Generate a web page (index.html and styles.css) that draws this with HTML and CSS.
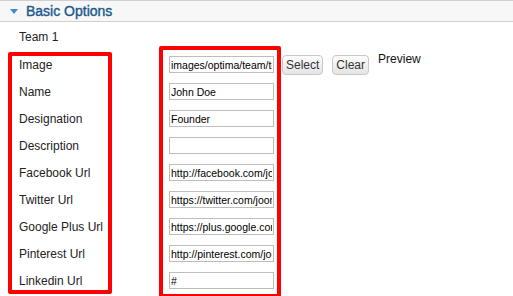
FILE: index.html
```html
<!DOCTYPE html>
<html lang="en">
<head>
    <meta charset="UTF-8">
    <title>Basic Options</title>
    <link rel="stylesheet" href="styles.css">
</head>
<body>
    <div class="panel-head">
        <span class="caret"></span>
        <span class="panel-title">Basic Options</span>
    </div>
    <div class="panel-body">
        <div class="group-title">Team 1</div>
        <div class="row">
            <label>Image</label>
            <div class="field">
                <input type="text" value="images/optima/team/team1.jpg">
                <button class="btn btn-select">Select</button>
                <button class="btn">Clear</button>
                <span class="preview">Preview</span>
            </div>
        </div>
        <div class="row"><label>Name</label><div class="field"><input type="text" value="John Doe"></div></div>
        <div class="row"><label>Designation</label><div class="field"><input type="text" value="Founder"></div></div>
        <div class="row"><label>Description</label><div class="field"><input type="text" value=""></div></div>
        <div class="row"><label>Facebook Url</label><div class="field"><input type="text" value="http://facebook.com/joomshaper"></div></div>
        <div class="row"><label>Twitter Url</label><div class="field"><input type="text" value="https://twitter.com/joomshaper"></div></div>
        <div class="row"><label>Google Plus Url</label><div class="field"><input type="text" value="https://plus.google.com/joomshaper"></div></div>
        <div class="row"><label>Pinterest Url</label><div class="field"><input type="text" value="http://pinterest.com/joomshaper"></div></div>
        <div class="row"><label>Linkedin Url</label><div class="field"><input type="text" value="#"></div></div>
    </div>

    <!-- highlight marks -->
    <div class="mark mark-labels"></div>
    <div class="mark mark-fields"></div>
</body>
</html>
```

FILE: styles.css
```css
body {
    margin: 0;
    font-family: "Liberation Sans", Arial, sans-serif;
    font-size: 12px;
    color: #222;
    background: #fff;
}
.panel-head {
    display: flex;
    align-items: center;
    height: 20px;
    border-top: 1px solid #d0d0d0;
    border-bottom: 1px solid #d0d0d0;
    background: #f7f7f7;
    padding-left: 10px;
}
.caret {
    width: 0;
    height: 0;
    border-left: 4px solid transparent;
    border-right: 4px solid transparent;
    border-top: 5px solid #3b8dcf;
    margin-right: 8px;
    margin-top: 1px;
}
.panel-title {
    font-size: 14px;
    color: #1b5b8c;
    -webkit-text-stroke: 0.4px #1b5b8c;
}
.panel-body {
    padding: 2px 0 0 19px;
}
.group-title {
    height: 27px;
    line-height: 27px;
}
.row {
    display: flex;
    align-items: center;
    height: 27px;
}
.row label {
    width: 150px;
}
.field {
    display: flex;
    align-items: center;
}
.field input {
    box-sizing: border-box;
    width: 105px;
    height: 17px;
    margin: 0;
    padding: 0 1px;
    border: 1px solid #bdbdbd;
    font-family: "Liberation Sans", Arial, sans-serif;
    font-size: 10.5px;
    color: #000;
    outline: none;
}
.btn {
    height: 20px;
    margin-left: 9px;
    padding: 0 3px;
    border: 1px solid #c8c8c8;
    border-radius: 4px;
    background: linear-gradient(#fdfdfd, #e4e4e4);
    font-family: "Liberation Sans", Arial, sans-serif;
    font-size: 12px;
    color: #333;
}
.btn-select {
    margin-left: 8px;
}
.preview {
    margin-left: 9px;
    align-self: flex-start;
    margin-top: -3px;
    color: #111;
}
.mark {
    position: absolute;
    border: 4px solid #f00;
    border-radius: 2px;
    box-sizing: border-box;
}
.mark-labels {
    left: 8px;
    top: 52px;
    width: 104px;
    height: 242px;
}
.mark-fields {
    left: 159px;
    top: 46px;
    width: 122px;
    height: 252px;
}
```
